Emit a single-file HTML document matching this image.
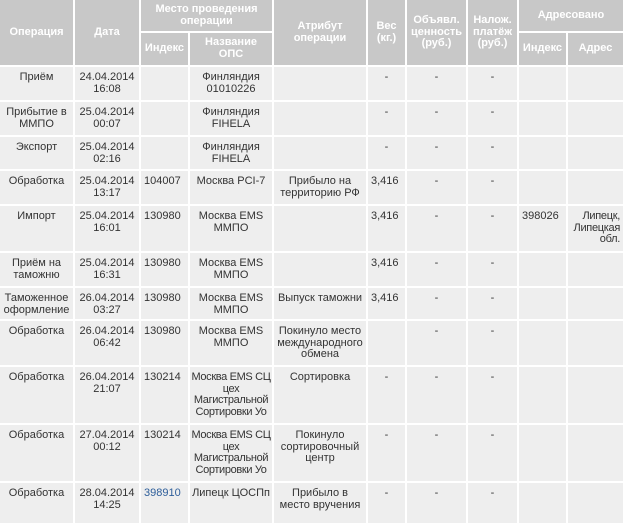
<!DOCTYPE html><html><head><meta charset="utf-8"><style>
body{margin:0;background:#fff;width:640px;height:516px;overflow:hidden;font-family:"Liberation Sans",Tahoma,sans-serif;font-size:11px;color:#333}
table{position:absolute;left:-2px;top:-2px;width:627px;border-collapse:separate;border-spacing:2px;table-layout:fixed}
td,th{padding:0 1px;text-align:center;line-height:11.7px;overflow:hidden}
th{background:#c8c8c8;color:#fff;font-weight:bold;vertical-align:middle}
td{background:#eeeeee;vertical-align:top;padding-top:5px}
td.l{text-align:left;padding-left:3px}
td.n{white-space:nowrap;padding:5px 0 0 0;letter-spacing:-0.35px}
td.r{text-align:right;padding-right:3px;letter-spacing:-0.3px}
a{color:#2e5e9a;text-decoration:none}
</style></head><body>
<table>
<colgroup><col style="width:73px"><col style="width:64px"><col style="width:47px"><col style="width:82px"><col style="width:92px"><col style="width:37px"><col style="width:59px"><col style="width:49px"><col style="width:47px"><col style="width:55px"></colgroup>
<tr style="height:31px"><th rowspan="2">Операция</th><th rowspan="2">Дата</th><th colspan="2">Место проведения операции</th><th rowspan="2">Атрибут операции</th><th rowspan="2">Вес (кг.)</th><th rowspan="2">Объявл. ценность (руб.)</th><th rowspan="2">Налож. платёж (руб.)</th><th colspan="2">Адресовано</th></tr>
<tr style="height:32px"><th>Индекс</th><th>Название<br>ОПС</th><th>Индекс</th><th>Адрес</th></tr>
<tr style="height:33px"><td>Приём</td><td>24.04.2014<br>16:08</td><td></td><td>Финляндия<br>01010226</td><td></td><td>-</td><td>-</td><td>-</td><td></td><td></td></tr>
<tr style="height:33px"><td>Прибытие в ММПО</td><td>25.04.2014<br>00:07</td><td></td><td>Финляндия<br>FIHELA</td><td></td><td>-</td><td>-</td><td>-</td><td></td><td></td></tr>
<tr style="height:32px"><td>Экспорт</td><td>25.04.2014<br>02:16</td><td></td><td>Финляндия<br>FIHELA</td><td></td><td>-</td><td>-</td><td>-</td><td></td><td></td></tr>
<tr style="height:33px"><td>Обработка</td><td>25.04.2014<br>13:17</td><td class="l">104007</td><td>Москва PCI-7</td><td>Прибыло на территорию РФ</td><td class="l">3,416</td><td>-</td><td>-</td><td></td><td></td></tr>
<tr style="height:45px"><td>Импорт</td><td>25.04.2014<br>16:01</td><td class="l">130980</td><td>Москва EMS<br>ММПО</td><td></td><td class="l">3,416</td><td>-</td><td>-</td><td class="l">398026</td><td class="r">Липецк,<br>Липецкая<br>обл.</td></tr>
<tr style="height:33px"><td>Приём на таможню</td><td>25.04.2014<br>16:31</td><td class="l">130980</td><td>Москва EMS<br>ММПО</td><td></td><td class="l">3,416</td><td>-</td><td>-</td><td></td><td></td></tr>
<tr style="height:31px"><td>Таможенное оформление</td><td>26.04.2014<br>03:27</td><td class="l">130980</td><td>Москва EMS<br>ММПО</td><td>Выпуск таможни</td><td class="l">3,416</td><td>-</td><td>-</td><td></td><td></td></tr>
<tr style="height:44px"><td>Обработка</td><td>26.04.2014<br>06:42</td><td class="l">130980</td><td>Москва EMS<br>ММПО</td><td>Покинуло место<br>международного<br>обмена</td><td></td><td>-</td><td>-</td><td></td><td></td></tr>
<tr style="height:56px"><td>Обработка</td><td>26.04.2014<br>21:07</td><td class="l">130214</td><td class="n">Москва EMS СЦ<br>цех<br>Магистральной<br>Сортировки Уо</td><td>Сортировка</td><td>-</td><td>-</td><td>-</td><td></td><td></td></tr>
<tr style="height:56px"><td>Обработка</td><td>27.04.2014<br>00:12</td><td class="l">130214</td><td class="n">Москва EMS СЦ<br>цех<br>Магистральной<br>Сортировки Уо</td><td>Покинуло<br>сортировочный<br>центр</td><td>-</td><td>-</td><td>-</td><td></td><td></td></tr>
<tr style="height:40px"><td>Обработка</td><td>28.04.2014<br>14:25</td><td class="l"><a>398910</a></td><td>Липецк ЦОСПп</td><td>Прибыло в<br>место вручения</td><td>-</td><td>-</td><td>-</td><td></td><td></td></tr>
</table>
</body></html>
